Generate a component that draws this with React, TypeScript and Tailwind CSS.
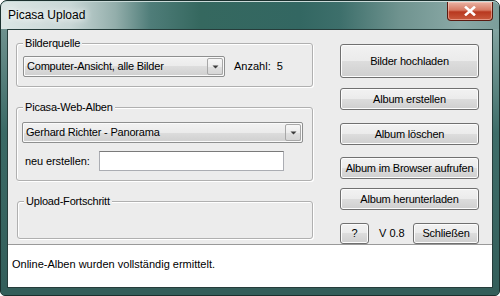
import React from 'react';

const btn =
  "flex items-center justify-center rounded-[3px] border border-[#707070] bg-[linear-gradient(to_bottom,#f2f2f2_0%,#ebebeb_50%,#dddddd_50%,#cfcfcf_100%)] shadow-[inset_0_0_0_1px_#fcfcfc] text-[11px] leading-none tracking-[-0.2px] text-black";

const DropArrow = () => (
  <div className="flex h-[17px] w-[16px] items-center justify-center rounded-[2px] border border-[#a7a7a7] bg-[linear-gradient(to_bottom,#f7f7f7_0%,#ececec_50%,#e0e0e0_50%,#d6d6d6_100%)]">
    <svg width="7" height="4" viewBox="0 0 7 4">
      <path d="M0.5 0.5 L6.5 0.5 L3.5 3.5 Z" fill="#3c3c3c" />
    </svg>
  </div>
);

const Combo = ({ text, width }: { text: string; width: string }) => (
  <div className={`${width} flex h-[21px] items-center justify-between rounded-[2px] border border-[#8e8f8f] bg-[linear-gradient(to_bottom,#f2f2f2_0%,#ebebeb_50%,#dddddd_50%,#cfcfcf_100%)] pl-[3px] pr-[1px] shadow-[inset_0_0_0_1px_#fafafa]`}>
    <span className="text-[11px] leading-none tracking-[-0.2px]">{text}</span>
    <DropArrow />
  </div>
);

const Group = ({ label, className, children }: { label: string; className: string; children?: React.ReactNode }) => (
  <div className={`relative rounded-[3px] border border-[#b0b0b0] shadow-[inset_1px_1px_0_#ffffff,1px_1px_0_#ffffff] ${className}`}>
    <span className="absolute -top-[8px] left-[6px] bg-[#ececec] px-[2px] text-[11px] leading-[14px] tracking-[-0.2px]">
      {label}
    </span>
    {children}
  </div>
);

export default function App() {
  return (
    <div className="h-[296px] w-[500px] bg-white font-['Liberation_Sans',Arial,sans-serif] text-black">
      <div className="flex h-full w-full flex-col rounded-t-[7px] rounded-b-[5px] border border-[#1b302e] bg-[#3b6a66]">
        {/* Title bar */}
        <div className="flex h-[28px] items-start justify-between rounded-t-[6px] border-t border-[#c9dad8] bg-[linear-gradient(to_right,#dce6e5_0%,#c8d7d6_14%,#93aeab_23%,#4f7d79_30%,#35685f_40%,#336762_60%,#3d6f6b_68%,#6f938f_80%,#8aa9a6_92%,#7c9e9b_100%)]">
          <span className="ml-[7px] mt-[6px] text-[12px] leading-[15px] [text-shadow:0_0_6px_#ffffff,0_0_10px_#ffffff]">
            Picasa Upload
          </span>
          <div className="mr-[6px] flex h-[19px] w-[46px] items-center justify-center rounded-b-[4px] border border-t-0 border-[#5a1a10] bg-[linear-gradient(to_bottom,#e9b3a4_0%,#d77a63_45%,#b8381f_55%,#c95a3d_100%)] shadow-[inset_0_0_0_1px_rgba(255,210,200,0.5)]">
            <svg width="12" height="10" viewBox="0 0 12 10">
              <path d="M2 1.5 L10 8.5 M10 1.5 L2 8.5" stroke="#ffffff" strokeWidth="2.6" strokeLinecap="square" />
            </svg>
          </div>
        </div>

        {/* Frame + client */}
        <div className="flex flex-1">
          <div className="w-[6px] bg-[linear-gradient(to_bottom,#6e918e,#3a6965_40%,#345f5b)]" />
          <div className="flex h-[259px] w-[486px] flex-col border border-[#263d3b] bg-[#ececec]">
            <div className="flex h-[214px]">
              {/* Left column */}
              <div className="ml-[8px] flex w-[297px] flex-col">
                <Group label="Bilderquelle" className="mt-[13px] h-[44px]">
                  <div className="ml-[6px] mt-[12px] flex items-center">
                    <Combo text="Computer-Ansicht, alle Bilder" width="w-[202px]" />
                    <span className="ml-[9px] text-[11px] leading-none">Anzahl:&nbsp; 5</span>
                  </div>
                </Group>
                <Group label="Picasa-Web-Alben" className="mt-[20px] h-[74px]">
                  <div className="ml-[5px] mt-[14px]">
                    <Combo text="Gerhard Richter - Panorama" width="w-[281px]" />
                  </div>
                  <div className="ml-[8px] mt-[8px] flex items-center">
                    <span className="text-[11px] leading-none tracking-[-0.1px]">neu erstellen:</span>
                    <div className="ml-[9px] h-[20px] w-[185px] border border-[#abadb3] border-t-[#7a7a7a] bg-white" />
                  </div>
                </Group>
                <Group label="Upload-Fortschritt" className="ml-[1px] mt-[20px] h-[38px]" />
              </div>

              {/* Right column */}
              <div className="ml-[27px] flex w-[139px] flex-col">
                <div className={`${btn} mt-[14px] h-[34px]`}>Bilder hochladen</div>
                <div className={`${btn} mt-[10px] h-[22px]`}>Album erstellen</div>
                <div className={`${btn} mt-[13px] h-[22px]`}>Album löschen</div>
                <div className={`${btn} mt-[12px] h-[22px]`}>Album im Browser aufrufen</div>
                <div className={`${btn} mt-[9px] h-[22px]`}>Album herunterladen</div>
                <div className="mt-[13px] flex h-[21px] items-center">
                  <div className={`${btn} h-[21px] w-[29px]`}>?</div>
                  <span className="ml-[10px] text-[11px] leading-none">V 0.8</span>
                  <div className={`${btn} ml-auto h-[21px] w-[66px]`}>Schließen</div>
                </div>
              </div>
            </div>

            {/* Status area */}
            <div className="flex-1 border-t border-[#9a9a9a] bg-white pl-[4px] pt-[6px]">
              <span className="text-[11px] leading-[14px]">Online-Alben wurden vollständig ermittelt.</span>
            </div>
          </div>
          <div className="w-[6px] bg-[linear-gradient(to_bottom,#83a4a1,#3e6d69_40%,#345f5b)]" />
        </div>
        <div className="h-[7px] rounded-b-[4px] bg-[#345e5a]" />
      </div>
    </div>
  );
}
